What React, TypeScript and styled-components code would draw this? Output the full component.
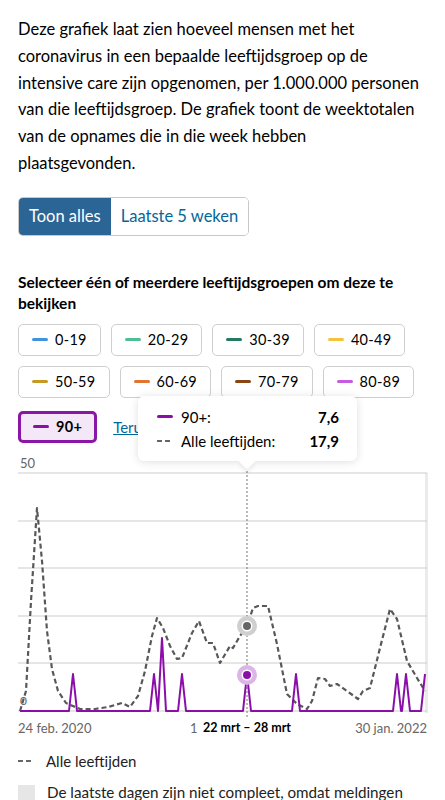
import styled, { createGlobalStyle } from "styled-components";

const GlobalStyle = createGlobalStyle`
  * { box-sizing: border-box; }
  body {
    margin: 0;
    background: #fff;
    color: #000;
    font-family: Lato, "Noto Sans", sans-serif;
  }
`;

const Page = styled.main`
  width: 445px;
  height: 800px;
  overflow: hidden;
  padding: 16px 18px 0;
`;

const Intro = styled.p`
  margin: 0;
  font-size: 16.5px;
  line-height: 26.8px;
`;

const Toggle = styled.div`
  display: inline-flex;
  margin-top: 20px;
  border: 1px solid #c8c8c8;
  border-radius: 5px;
  overflow: hidden;
  height: 39px;
`;

const ToggleButton = styled.button<{ active?: boolean }>`
  border: 0;
  padding: 0 10px;
  font: inherit;
  font-size: 16.5px;
  background: ${({ active }) => (active ? "#2b6596" : "#fff")};
  color: ${({ active }) => (active ? "#fff" : "#01689b")};
`;

const Heading = styled.h3`
  margin: 36px 0 0;
  font-size: 15.5px;
  line-height: 21px;
  font-weight: 700;
`;

const Chips = styled.div`
  display: flex;
  flex-wrap: wrap;
  gap: 10px 10px;
  margin-top: 10px;
`;

const Chip = styled.button<{ selected?: boolean }>`
  display: flex;
  align-items: center;
  gap: 7px;
  height: 32px;
  padding: 0 ${({ selected }) => (selected ? "12px" : "13px")};
  border: ${({ selected }) => (selected ? "3px solid #8a16a8" : "1px solid #cfcfcf")};
  border-radius: 5px;
  background: ${({ selected }) => (selected ? "#f4e7f7" : "#fff")};
  font: inherit;
  font-size: 14.5px;
  letter-spacing: 0.3px;
  font-weight: ${({ selected }) => (selected ? 700 : 400)};
  color: #000;
`;

const Swatch = styled.span<{ color: string }>`
  flex: none;
  width: 16px;
  height: 3px;
  border-radius: 2px;
  background: ${({ color }) => color};
`;

const LastRow = styled.div`
  display: flex;
  align-items: center;
  gap: 16px;
  margin-top: 13px;
`;

const ResetLink = styled.a`
  color: #01689b;
  text-decoration: underline;
  font-size: 15px;
`;

const ChartWrap = styled.div`
  position: relative;
  margin-top: 13px;
`;

const Tooltip = styled.div`
  position: absolute;
  left: 120px;
  top: -60px;
  width: 219px;
  padding: 9px 18px 8px 19px;
  background: #fff;
  border-radius: 6px;
  box-shadow: 0 1px 8px rgba(0, 0, 0, 0.13);
  z-index: 2;

  &::after {
    content: "";
    position: absolute;
    left: 103px;
    bottom: -6px;
    width: 12px;
    height: 12px;
    background: #fff;
    transform: rotate(45deg);
    box-shadow: 3px 3px 4px rgba(0, 0, 0, 0.06);
  }
`;

const TipRow = styled.div`
  display: grid;
  grid-template-columns: 24px 1fr auto;
  align-items: center;
  font-size: 15px;
  line-height: 24px;
`;

const TipValue = styled.span`
  font-weight: 700;
`;

const DashSwatch = styled.span`
  flex: none;
  width: 14px;
  height: 2px;
  background: repeating-linear-gradient(90deg, #666 0 5px, transparent 5px 8px);
`;

const Axis = styled.div`
  position: relative;
  display: flex;
  justify-content: space-between;
  align-items: center;
  height: 20px;
  font-size: 13px;
  color: #666;
`;

const AxisTick = styled.span`
  position: absolute;
  left: 172px;
`;

const AxisCursor = styled.b`
  position: absolute;
  left: 229px;
  transform: translateX(-50%);
  color: #000;
  font-size: 12.5px;
  white-space: nowrap;
`;

const Legend = styled.div`
  display: flex;
  align-items: center;
  gap: 14px;
  margin-top: 12px;
  font-size: 15px;
  color: #222;
  line-height: 22px;
`;

const Note = styled.div`
  display: flex;
  align-items: flex-start;
  gap: 12px;
  margin-top: 9px;
  font-size: 15.2px;
  line-height: 22px;
  color: #222;
`;

const NoteBox = styled.span`
  flex: none;
  width: 17px;
  height: 17px;
  margin-top: 4px;
  background: #e6e6e6;
`;

const groups = [
  { label: "0-19", color: "#3e94dd" },
  { label: "20-29", color: "#4dbf92" },
  { label: "30-39", color: "#227a60" },
  { label: "40-49", color: "#f6c23c" },
  { label: "50-59", color: "#c79a26" },
  { label: "60-69", color: "#e07430" },
  { label: "70-79", color: "#8a4514" },
  { label: "80-89", color: "#c65ae0" },
];

// page coordinates of the "alle leeftijden" line
const allAges: [number, number][] = [
  [20, 710], [26, 690], [31, 600], [37, 507], [42, 560], [47, 630], [52, 668],
  [58, 690], [66, 702], [80, 708], [95, 708], [108, 706], [122, 702], [130, 706],
  [138, 695], [145, 670], [152, 635], [157, 617], [163, 627], [170, 645],
  [177, 658], [182, 657], [192, 632], [199, 620], [207, 642], [213, 642],
  [220, 662], [230, 645], [233, 647], [240, 635], [247, 625], [253, 607],
  [258, 605], [268, 605], [277, 643], [287, 693], [297, 703], [307, 708],
  [312, 700], [318, 677], [325, 678], [330, 685], [337, 683], [347, 690],
  [358, 698], [363, 690], [370, 687], [380, 647], [390, 608], [397, 618],
  [407, 660], [417, 677], [425, 690],
];

const spikes: [number, number][] = [
  [73, 673], [154, 673], [162, 637], [182, 673], [247, 673], [296, 673],
  [397, 673], [406, 673],
];

const OX = 18;
const OY = 455;
const pt = (x: number, y: number) => `${x - OX},${y - OY}`;

function purplePath() {
  const pts: string[] = [pt(20, 710)];
  spikes.forEach(([x, y]) => {
    pts.push(pt(x - 4, 710), pt(x, y), pt(x + 4, 710));
  });
  pts.push(pt(421, 710), pt(425, 673));
  return pts.join(" ");
}

function Chart() {
  const grid = [472, 520, 567, 615, 662, 710];
  return (
    <svg width="410" height="262" viewBox="0 0 410 262" style={{ display: "block" }}>
      <rect x={425 - OX} y={472 - OY} width="3" height="240" fill="#ebebeb" />
      {grid.map((y) => (
        <line key={y} x1="0" x2="409" y1={y - OY} y2={y - OY} stroke="#cdcdcd" strokeWidth="1" />
      ))}
      <text x="2" y="12" fontSize="13" fill="#666" fontFamily="Lato, sans-serif">50</text>
      <text x="2" y={704 - OY} fontSize="12" fill="#666" fontFamily="Lato, sans-serif">0</text>
      <line x1={247 - OX} x2={247 - OX} y1={466 - OY} y2={262} stroke="#777" strokeWidth="1" strokeDasharray="2 2" />
      <polyline
        points={allAges.map(([x, y]) => pt(x, y)).join(" ")}
        fill="none"
        stroke="#585858"
        strokeWidth="2.2"
        strokeDasharray="5 3"
        strokeLinejoin="round"
      />
      <polyline points={purplePath()} fill="none" stroke="#8a0fa8" strokeWidth="2" strokeLinejoin="round" />
      <circle cx={247 - OX} cy={625 - OY} r="10" fill="#cfcfcf" />
      <circle cx={247 - OX} cy={625 - OY} r="5.5" fill="#fff" />
      <circle cx={247 - OX} cy={625 - OY} r="4" fill="#666" />
      <circle cx={247 - OX} cy={674 - OY} r="10" fill="#dcb4e6" />
      <circle cx={247 - OX} cy={674 - OY} r="5.5" fill="#fff" />
      <circle cx={247 - OX} cy={674 - OY} r="4" fill="#8a0fa8" />
    </svg>
  );
}

export default function App() {
  return (
    <>
      <GlobalStyle />
      <Page>
        <Intro>
          Deze grafiek laat zien hoeveel mensen met het coronavirus in een bepaalde
          leeftijdsgroep op de intensive care zijn opgenomen, per 1.000.000 personen
          van die leeftijdsgroep. De grafiek toont de weektotalen van de opnames die in
          die week hebben plaatsgevonden.
        </Intro>
        <Toggle>
          <ToggleButton active>Toon alles</ToggleButton>
          <ToggleButton>Laatste 5 weken</ToggleButton>
        </Toggle>
        <Heading>Selecteer één of meerdere leeftijdsgroepen om deze te bekijken</Heading>
        <Chips>
          {groups.map((g) => (
            <Chip key={g.label}>
              <Swatch color={g.color} />
              {g.label}
            </Chip>
          ))}
        </Chips>
        <LastRow>
          <Chip selected>
            <Swatch color="#8a0fa8" />
            90+
          </Chip>
          <ResetLink href="#">Terug naar alle leeftijden</ResetLink>
        </LastRow>
        <ChartWrap>
          <Tooltip>
            <TipRow>
              <Swatch color="#8a0fa8" />
              <span>90+:</span>
              <TipValue>7,6</TipValue>
            </TipRow>
            <TipRow>
              <DashSwatch />
              <span>Alle leeftijden:</span>
              <TipValue>17,9</TipValue>
            </TipRow>
          </Tooltip>
          <Chart />
          <Axis>
            <span>24 feb. 2020</span>
            <AxisTick>1</AxisTick>
            <AxisCursor>22 mrt – 28 mrt</AxisCursor>
            <span>30 jan. 2022</span>
          </Axis>
        </ChartWrap>
        <Legend>
          <DashSwatch />
          Alle leeftijden
        </Legend>
        <Note>
          <NoteBox />
          De laatste dagen zijn niet compleet, omdat meldingen
        </Note>
      </Page>
    </>
  );
}
